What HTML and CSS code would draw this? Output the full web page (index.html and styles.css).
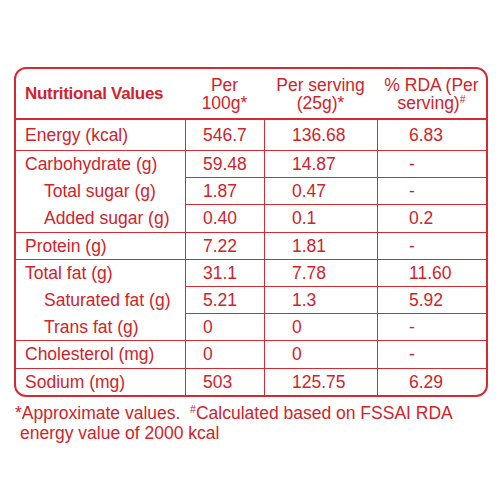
FILE: index.html
```html
<html lang="en">
  <head>
    <meta charset="utf-8"/>
    <title>Nutritional Values</title>
    <link rel="stylesheet" href="styles.css">
  </head>
  <body>
    <div class="panel">
      <table class="facts">
        <colgroup>
          <col class="c-label"/>
          <col class="c-100"/>
          <col class="c-serving"/>
          <col class="c-rda"/>
        </colgroup>
        <thead>
          <tr>
            <th class="title">Nutritional Values</th>
            <th>Per<br/>100g*</th>
            <th>Per serving<br/>(25g)*</th>
            <th>% RDA (Per<br/>serving)<span class="mark">#</span></th>
          </tr>
        </thead>
        <tbody>
          <tr class="first">
            <td class="label">Energy (kcal)</td>
            <td class="v1">546.7</td>
            <td class="v2">136.68</td>
            <td class="v3">6.83</td>
          </tr>
          <tr>
            <td class="label">Carbohydrate (g)</td>
            <td class="v1">59.48</td>
            <td class="v2">14.87</td>
            <td class="v3">-</td>
          </tr>
          <tr class="sub">
            <td class="label">Total sugar (g)</td>
            <td class="v1">1.87</td>
            <td class="v2">0.47</td>
            <td class="v3">-</td>
          </tr>
          <tr class="sub">
            <td class="label">Added sugar (g)</td>
            <td class="v1">0.40</td>
            <td class="v2">0.1</td>
            <td class="v3">0.2</td>
          </tr>
          <tr>
            <td class="label">Protein (g)</td>
            <td class="v1">7.22</td>
            <td class="v2">1.81</td>
            <td class="v3">-</td>
          </tr>
          <tr>
            <td class="label">Total fat (g)</td>
            <td class="v1">31.1</td>
            <td class="v2">7.78</td>
            <td class="v3">11.60</td>
          </tr>
          <tr class="sub">
            <td class="label">Saturated fat (g)</td>
            <td class="v1">5.21</td>
            <td class="v2">1.3</td>
            <td class="v3">5.92</td>
          </tr>
          <tr class="sub">
            <td class="label">Trans fat (g)</td>
            <td class="v1">0</td>
            <td class="v2">0</td>
            <td class="v3">-</td>
          </tr>
          <tr>
            <td class="label">Cholesterol (mg)</td>
            <td class="v1">0</td>
            <td class="v2">0</td>
            <td class="v3">-</td>
          </tr>
          <tr>
            <td class="label">Sodium (mg)</td>
            <td class="v1">503</td>
            <td class="v2">125.75</td>
            <td class="v3">6.29</td>
          </tr>
        </tbody>
      </table>
    </div>
    <p class="note">*Approximate values.&nbsp; <span class="mark">#</span>Calculated based on FSSAI RDA energy value of 2000 kcal</p>
  </body>
</html>
```

FILE: styles.css
```css
* {
  font-family: "Liberation Sans", Arial, Helvetica, sans-serif;
}
body {
  margin: 8px;
  background: #fff;
  color: #d2232a;
}
.panel {
  width: 474px;
  box-sizing: border-box;
  margin: 59px 0 0 6px;
  border: 2px solid #d52b35;
  border-radius: 12px;
  overflow: hidden;
}
.facts {
  width: 100%;
  table-layout: fixed;
  border-collapse: separate;
  border-spacing: 0;
  font-size: 17.5px;
}
.c-label { width: 169px; }
.c-100 { width: 79px; }
.c-serving { width: 113px; }
.c-rda { width: 109px; }
th {
  height: 51px;
  padding: 0;
  font-weight: normal;
  line-height: 18px;
  text-align: center;
  vertical-align: middle;
  border-bottom: 2px solid #d52b35;
}
th.title {
  text-align: left;
  padding-left: 9px;
  font-weight: bold;
  font-size: 17px;
  letter-spacing: -0.3px;
}
td {
  height: 27.2px;
  padding: 0;
  line-height: 20px;
  white-space: nowrap;
  border-top: 1.5px solid #d52b35;
}
td + td {
  border-left: 1.5px solid #d52b35;
}
tr.first td {
  border-top: none;
  height: 30px;
}
tr.sub td.label {
  border-top: none;
  padding-left: 28px;
}
.label {
  padding-left: 9px;
}
.v1 { padding-left: 17px; }
.v2 { padding-left: 27px; }
.v3 { padding-left: 31px; }
.mark {
  font-size: 0.6em;
  vertical-align: 0.6em;
  line-height: 0;
}
.note {
  margin: 6px 0 0 0;
  padding-left: 12px;
  text-indent: -5px;
  width: 460px;
  font-size: 17.5px;
  line-height: 20px;
}
```
